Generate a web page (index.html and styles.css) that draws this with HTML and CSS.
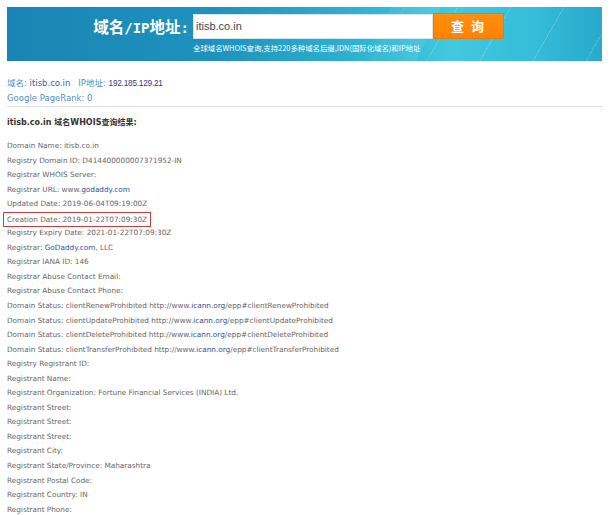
FILE: index.html
```html
<!DOCTYPE html>
<html lang="zh-CN">
<head>
<meta charset="utf-8">
<title>WHOIS</title>
<link rel="stylesheet" href="styles.css">
</head>
<body>
<div class="page">
  <div class="banner">
    <div class="stripes"></div>
    <div class="search">
      <div class="label">域名<span class="lat">/IP</span>地址<span class="lat">:</span></div>
      <div class="field">
        <div class="input-row">
          <div class="input">itisb.co.in</div>
          <div class="btn">查 询</div>
        </div>
        <div class="hint">全球域名WHOIS查询,支持220多种域名后缀,IDN(国际化域名)和IP地址</div>
      </div>
    </div>
  </div>

  <div class="info">
    <div class="info-line"><span class="k">域名:</span> <span class="v">itisb.co.in</span><span class="gap"></span><span class="k">IP地址:</span> <span class="ip">192.185.129.21</span></div>
    <div class="info-line"><span class="k">Google PageRank: 0</span></div>
  </div>

  <div class="rule"></div>

  <div class="title">itisb.co.in 域名WHOIS查询结果:</div>

  <div class="whois">
    <div class="row">Domain Name: itisb.co.in</div>
    <div class="row">Registry Domain ID: D414400000007371952-IN</div>
    <div class="row">Registrar WHOIS Server:</div>
    <div class="row">Registrar URL: www.<span class="a">godaddy.com</span></div>
    <div class="row">Updated Date: 2019-06-04T09:19:00Z</div>
    <div class="row"><span class="mark">Creation Date: 2019-01-22T07:09:30Z</span></div>
    <div class="row">Registry Expiry Date: 2021-01-22T07:09:30Z</div>
    <div class="row">Registrar: <span class="a">GoDaddy.com</span>, LLC</div>
    <div class="row">Registrar IANA ID: 146</div>
    <div class="row">Registrar Abuse Contact Email:</div>
    <div class="row">Registrar Abuse Contact Phone:</div>
    <div class="row">Domain Status: clientRenewProhibited http://www.<span class="a">icann.org</span>/epp#clientRenewProhibited</div>
    <div class="row">Domain Status: clientUpdateProhibited http://www.<span class="a">icann.org</span>/epp#clientUpdateProhibited</div>
    <div class="row">Domain Status: clientDeleteProhibited http://www.<span class="a">icann.org</span>/epp#clientDeleteProhibited</div>
    <div class="row">Domain Status: clientTransferProhibited http://www.<span class="a">icann.org</span>/epp#clientTransferProhibited</div>
    <div class="row">Registry Registrant ID:</div>
    <div class="row">Registrant Name:</div>
    <div class="row">Registrant Organization: Fortune Financial Services (INDIA) Ltd.</div>
    <div class="row">Registrant Street:</div>
    <div class="row">Registrant Street:</div>
    <div class="row">Registrant Street:</div>
    <div class="row">Registrant City:</div>
    <div class="row">Registrant State/Province: Maharashtra</div>
    <div class="row">Registrant Postal Code:</div>
    <div class="row">Registrant Country: IN</div>
    <div class="row">Registrant Phone:</div>
  </div>
</div>
</body>
</html>
```

FILE: styles.css
```css
* { box-sizing: border-box; }
html, body { margin: 0; padding: 0; background: #fff; }
body {
  font-family: "DejaVu Sans", Verdana, "Noto Sans CJK SC", sans-serif;
  color: #666;
}
.page { padding: 7px 7px 0 7px; width: 610px; }

.banner {
  position: relative;
  height: 54px;
  width: 595px;
  background: linear-gradient(90deg, #1a85b4 0%, #1e92bd 35%, #2fb4d2 60%, #40c9df 75%, #35bdd9 88%, #27aacd 100%);
  overflow: hidden;
}
.stripes {
  position: absolute;
  inset: 0;
  background:
    linear-gradient(115deg, transparent 0 62%, rgba(255,255,255,0.10) 62% 70%, transparent 70% 100%),
    repeating-linear-gradient(120deg, transparent 0 22px, rgba(255,255,255,0.18) 22px 23px, transparent 23px 46px);
  -webkit-mask-image: linear-gradient(90deg, transparent 0 55%, #000 75%);
  mask-image: linear-gradient(90deg, transparent 0 55%, #000 75%);
}
.search {
  position: relative;
  display: flex;
  padding-top: 6px;
}
.label {
  width: 186px;
  padding-right: 4px;
  text-align: right;
  color: #fff;
  font-weight: bold;
  font-size: 15.5px;
  line-height: 26px;
  font-family: "Noto Sans CJK SC", sans-serif;
  white-space: nowrap;
}
.label .lat { font-family: "DejaVu Sans Mono", monospace; font-size: 14px; }
.field { display: flex; flex-direction: column; }
.input-row { display: flex; align-items: flex-end; }
.input {
  width: 240px;
  height: 25px;
  background: #fff;
  border: 1px solid #d8e6ee;
  color: #444;
  font-family: "Liberation Sans", Arial, sans-serif;
  font-size: 11px;
  line-height: 23px;
  padding-left: 2px;
}
.btn {
  width: 71px;
  height: 26px;
  background: linear-gradient(180deg, #ff8f10 0%, #ff8300 100%);
  border: 1px solid #f07800;
  color: #fff;
  font-family: "Noto Sans CJK SC", sans-serif;
  font-weight: bold;
  font-size: 13px;
  line-height: 24px;
  text-align: center;
  letter-spacing: 2px;
}
.hint {
  color: #fff;
  font-family: "Noto Sans CJK SC", sans-serif;
  font-size: 7.4px;
  line-height: 10px;
  margin-top: 4px;
  white-space: nowrap;
}

.info { padding-top: 15px; font-size: 8.5px; }
.info-line { line-height: 15px; height: 15px; white-space: nowrap; }
.info .k { color: #4f8fbf; }
.info .v { color: #2a66a8; }
.info .ip { color: #343488; font-family: "Liberation Sans", Arial, sans-serif; font-size: 8.2px; letter-spacing: -0.2px; }
.gap { display: inline-block; width: 8px; }

.rule { height: 1px; background: #dddddd; margin-top: 0; width: 596px; }

.title {
  margin-top: 10px;
  font-size: 8px;
  font-weight: bold;
  color: #333;
  line-height: 12px;
}

.whois { margin-top: 10px; font-size: 7.3px; }
.row { height: 14.56px; line-height: 14.56px; white-space: nowrap; color: #666; }
.a { color: #2c4fa0; }
.mark {
  display: inline-block;
  border: 1px solid #d23c3c;
  margin-left: -4px;
  padding: 0 3px;
  line-height: 13px;
  height: 15px;
}
```
